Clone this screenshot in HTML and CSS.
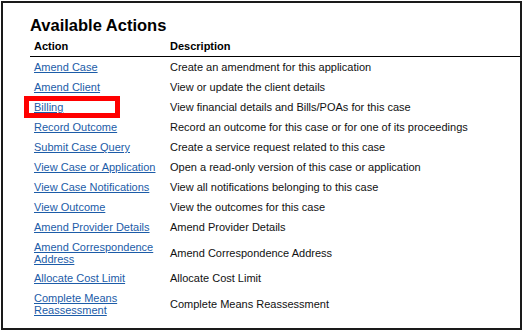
FILE: index.html
```html
<!DOCTYPE html>
<html lang="en">
<head>
  <meta charset="UTF-8" />
  <title>Available Actions</title>
  <link rel="stylesheet" href="styles.css">
</head>
<body>

  <div class="frame">
    <h1>Available Actions</h1>

    <table class="actions">
      <thead>
        <tr>
          <th class="col-action">Action</th>
          <th>Description</th>
        </tr>
      </thead>
      <tbody>
        <tr>
          <td><a href="#">Amend Case</a></td>
          <td>Create an amendment for this application</td>
        </tr>
        <tr>
          <td><a href="#">Amend Client</a></td>
          <td>View or update the client details</td>
        </tr>
        <tr>
          <td class="highlight"><a href="#">Billing</a></td>
          <td>View financial details and Bills/POAs for this case</td>
        </tr>
        <tr>
          <td><a href="#">Record Outcome</a></td>
          <td>Record an outcome for this case or for one of its proceedings</td>
        </tr>
        <tr>
          <td><a href="#">Submit Case Query</a></td>
          <td>Create a service request related to this case</td>
        </tr>
        <tr>
          <td><a href="#">View Case or Application</a></td>
          <td>Open a read-only version of this case or application</td>
        </tr>
        <tr>
          <td><a href="#">View Case Notifications</a></td>
          <td>View all notifications belonging to this case</td>
        </tr>
        <tr>
          <td><a href="#">View Outcome</a></td>
          <td>View the outcomes for this case</td>
        </tr>
        <tr>
          <td><a href="#">Amend Provider Details</a></td>
          <td>Amend Provider Details</td>
        </tr>
        <tr>
          <td><a href="#">Amend Correspondence Address</a></td>
          <td>Amend Correspondence Address</td>
        </tr>
        <tr>
          <td><a href="#">Allocate Cost Limit</a></td>
          <td>Allocate Cost Limit</td>
        </tr>
        <tr>
          <td><a href="#">Complete Means Reassessment</a></td>
          <td>Complete Means Reassessment</td>
        </tr>
      </tbody>
    </table>
  </div>

</body>
</html>
```

FILE: styles.css
```css
body {
  margin: 0;
  background: #fff;
  font-family: "Liberation Sans", Arial, sans-serif;
  color: #111;
}

.frame {
  margin: 1px 0 0 1px;
  width: 521px;
  height: 329px;
  box-sizing: border-box;
  border: 2px solid #1a1a1a;
  padding: 13px 0 0 27px;
  box-shadow: 0 2px 0 #c8c8c8;
}

h1 {
  margin: 0;
  font-size: 16.5px;
  line-height: 18px;
  font-weight: bold;
  color: #000;
}

.actions {
  width: 100%;
  border-collapse: collapse;
  font-size: 11px;
}

.actions th {
  text-align: left;
  font-size: 11px;
  font-weight: bold;
  line-height: 14px;
  padding: 5px 4px 3px;
  border-bottom: 1px solid #000;
  color: #000;
}

.actions .col-action {
  width: 128px;
}

.actions td {
  padding: 3.5px 4px;
  height: 13px;
  line-height: 12px;
  vertical-align: middle;
}

.actions a {
  color: #1c5ca8;
  text-decoration: underline;
}

.highlight {
  position: relative;
}

.highlight::before {
  content: "";
  position: absolute;
  left: -6px;
  top: -1px;
  width: 96px;
  height: 22px;
  box-sizing: border-box;
  border: 5px solid #ff0000;
}
```
